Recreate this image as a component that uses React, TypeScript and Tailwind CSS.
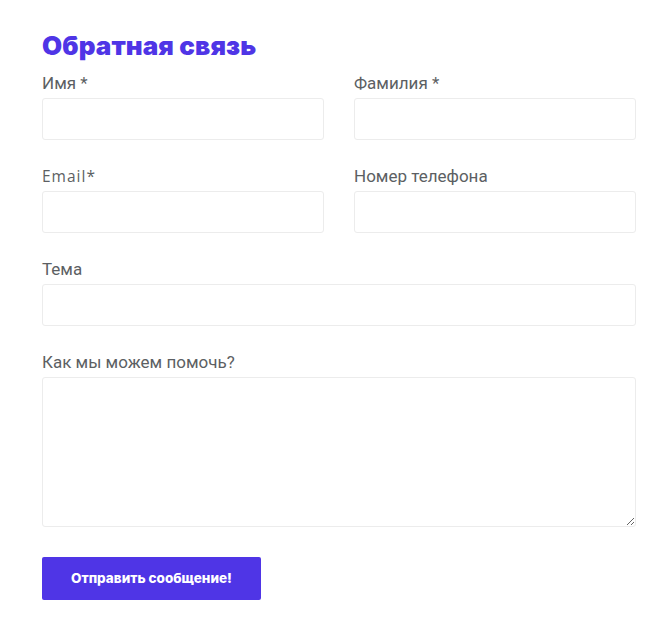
import React from "react";

const labelCls = "block h-6 leading-6 mb-1 text-[17px] text-[#5c5f63] pt-[1px]";
const inputCls = "block w-full h-[42px] rounded-[3px] border border-[#ececec] bg-white outline-none";

export default function App() {
  return (
    <div className="min-h-[628px] w-[670px] bg-white" style={{ fontFamily: "Roboto, 'Liberation Sans', sans-serif" }}>
      <div className="pl-[42px] pr-[34px] pt-[30px]">
        <h2 className="text-[26px] leading-[32px] font-black text-[#4f35e6] tracking-[0.1px] mb-[8px]" style={{ fontFamily: "Inter, sans-serif" }}>
          Обратная связь
        </h2>
        <div className="grid grid-cols-2 gap-x-[30px] gap-y-[23px]">
          <div>
            <label className={labelCls}>Имя *</label>
            <input className={inputCls} />
          </div>
          <div>
            <label className={labelCls}>Фамилия *</label>
            <input className={inputCls} />
          </div>
          <div>
            <label className={labelCls + " tracking-[1px]"} style={{ fontFamily: "'Open Sans', sans-serif", fontSize: "15.5px" }}>Email*</label>
            <input className={inputCls} />
          </div>
          <div>
            <label className={labelCls}>Номер телефона</label>
            <input className={inputCls} />
          </div>
          <div className="col-span-2">
            <label className={labelCls}>Тема</label>
            <input className={inputCls} />
          </div>
          <div className="col-span-2">
            <label className={labelCls}>Как мы можем помочь?</label>
            <textarea className="block w-full h-[150px] rounded-[3px] border border-[#ececec] bg-white outline-none" />
          </div>
        </div>
        <button className="mt-[30px] w-[219px] h-[43px] bg-[#4f35e6] text-white text-[13.5px] font-extrabold rounded-[2px]" style={{ fontFamily: "Inter, sans-serif" }}>
          Отправить сообщение!
        </button>
      </div>
    </div>
  );
}
